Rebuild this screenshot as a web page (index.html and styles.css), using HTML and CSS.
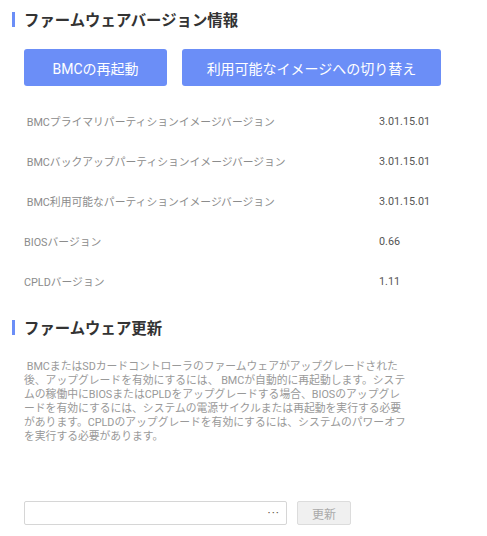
FILE: index.html
```html
<!DOCTYPE html>
<html lang="ja">
<head>
    <meta charset="UTF-8">
    <meta name="viewport" content="width=device-width, initial-scale=1.0">
    <title>ファームウェア</title>
    <link rel="stylesheet" href="styles.css">
</head>
<body>
    <div class="page">
        <h2 class="section-title">ファームウェアバージョン情報</h2>

        <div class="actions">
            <button class="primary-btn reboot">BMCの再起動</button>
            <button class="primary-btn switch">利用可能なイメージへの切り替え</button>
        </div>

        <div class="version-list">
            <div class="version-row">
                <span class="label">&nbsp;BMCプライマリパーティションイメージバージョン</span>
                <span class="value">3.01.15.01</span>
            </div>
            <div class="version-row">
                <span class="label">&nbsp;BMCバックアップパーティションイメージバージョン</span>
                <span class="value">3.01.15.01</span>
            </div>
            <div class="version-row">
                <span class="label">&nbsp;BMC利用可能なパーティションイメージバージョン</span>
                <span class="value">3.01.15.01</span>
            </div>
            <div class="version-row">
                <span class="label">BIOSバージョン</span>
                <span class="value">0.66</span>
            </div>
            <div class="version-row">
                <span class="label">CPLDバージョン</span>
                <span class="value">1.11</span>
            </div>
        </div>

        <h2 class="section-title update-title">ファームウェア更新</h2>

        <p class="note">&nbsp;BMCまたはSDカードコントローラのファームウェアがアップグレードされた後、アップグレードを有効にするには、 BMCが自動的に再起動します。システムの稼働中にBIOSまたはCPLDをアップグレードする場合、BIOSのアップグレードを有効にするには、システムの電源サイクルまたは再起動を実行する必要があります。CPLDのアップグレードを有効にするには、システムのパワーオフを実行する必要があります。</p>

        <div class="upload">
            <div class="file-box"><span class="dots">···</span></div>
            <button class="update-btn">更新</button>
        </div>
    </div>
</body>
</html>
```

FILE: styles.css
```css
body {
    margin: 0;
    background: #fff;
    font-family: Roboto, "Noto Sans CJK JP", sans-serif;
    color: #333;
}
.page {
    padding: 8px 12px;
}
.section-title {
    display: flex;
    align-items: center;
    margin: 0;
    height: 22px;
    font-size: 15.4px;
    font-weight: bold;
    color: #333;
}
.section-title::before {
    content: "";
    width: 3px;
    height: 15px;
    margin-right: 9px;
    background: #6b8ef7;
}
.actions {
    display: flex;
    gap: 15px;
    margin-top: 19px;
    padding-left: 12px;
}
.primary-btn {
    height: 37px;
    border: none;
    border-radius: 3px;
    background: #6b8ef7;
    color: #fff;
    font-family: inherit;
    font-size: 14px;
    cursor: pointer;
}
.reboot {
    width: 143px;
}
.switch {
    width: 259px;
}
.version-list {
    margin-top: 15px;
    padding-left: 12px;
}
.version-row {
    display: flex;
    align-items: center;
    height: 40px;
    font-size: 10.8px;
}
.version-row .label {
    width: 355px;
    color: #8c8c8c;
}
.version-row .value {
    color: #555;
}
.update-title {
    margin-top: 15px;
}
.note {
    width: 383px;
    margin: 22px 0 0 12px;
    font-size: 10.8px;
    line-height: 14px;
    color: #999;
}
.upload {
    display: flex;
    gap: 10px;
    margin-top: 57px;
    padding-left: 12px;
}
.file-box {
    display: flex;
    align-items: center;
    justify-content: flex-end;
    width: 255px;
    height: 22px;
    border: 1px solid #d6d6d6;
    border-radius: 2px;
    padding-right: 6px;
}
.file-box .dots {
    font-size: 12px;
    color: #6a5a4a;
    letter-spacing: 1px;
}
.update-btn {
    width: 54px;
    height: 24px;
    border: 1px solid #dcdcdc;
    border-radius: 2px;
    background: #f0f0f0;
    color: #aaa;
    font-family: inherit;
    font-size: 12px;
}
```
